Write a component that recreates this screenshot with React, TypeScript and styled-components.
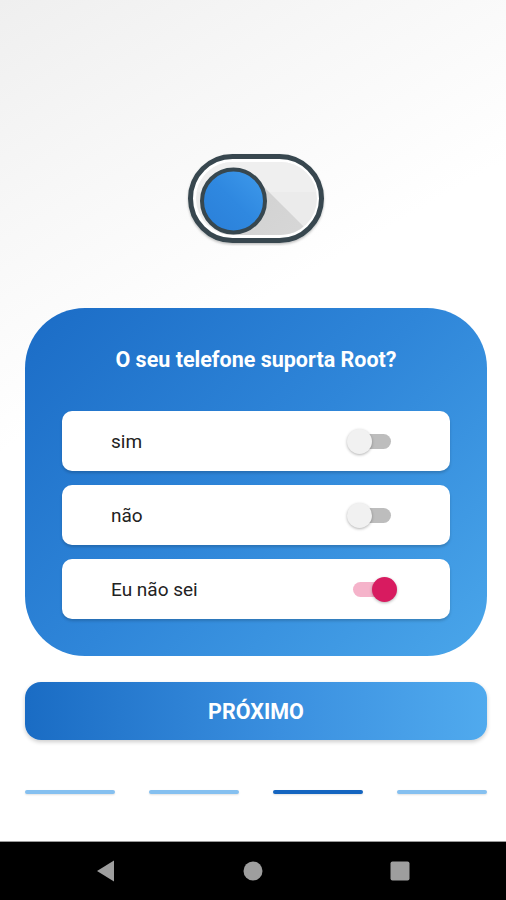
import React, { useState } from 'react';
import styled, { createGlobalStyle } from 'styled-components';

const GlobalStyle = createGlobalStyle`
  html, body {
    margin: 0;
    padding: 0;
  }
  body {
    font-family: Roboto, "Noto Sans", Arial, sans-serif;
    background: #ffffff;
  }
`;

const Screen = styled.div`
  width: 506px;
  height: 900px;
  display: flex;
  flex-direction: column;
  overflow: hidden;
  background: linear-gradient(150deg, #efefef 0%, #f7f7f7 18%, #ffffff 38%, #ffffff 100%);
`;

const Content = styled.div`
  flex: 1;
  display: flex;
  flex-direction: column;
  align-items: center;
  padding: 152px 13px 0 19px;
`;

const Hero = styled.svg`
  display: block;
  width: 140px;
  height: 94px;
`;

const Card = styled.div`
  width: 462px;
  box-sizing: border-box;
  margin-top: 62px;
  padding: 39px 37px 37px;
  border-radius: 60px;
  background: linear-gradient(135deg, #1b6cc6 0%, #2f86d9 50%, #4aa6ea 100%);
  display: flex;
  flex-direction: column;
  gap: 14px;
`;

const Title = styled.h2`
  margin: 0 0 24px;
  text-align: center;
  color: #ffffff;
  font-size: 21.5px;
  line-height: 26px;
  font-weight: 700;
`;

const Option = styled.label`
  height: 60px;
  border-radius: 10px;
  background: #ffffff;
  box-shadow: 0 2px 3px rgba(0, 0, 0, 0.18);
  display: flex;
  align-items: center;
  justify-content: space-between;
  padding: 0 53px 0 49px;
  cursor: pointer;
`;

const OptionText = styled.span`
  font-size: 19px;
  color: #222222;
`;

const Switch = styled.span<{ $on: boolean }>`
  position: relative;
  width: 38px;
  height: 15px;
  margin-right: 6px;
  border-radius: 8px;
  background: ${(p) => (p.$on ? '#f5b3ca' : '#bdbdbd')};

  &::after {
    content: '';
    position: absolute;
    top: -5px;
    left: ${(p) => (p.$on ? '19px' : '-6px')};
    width: 25px;
    height: 25px;
    border-radius: 50%;
    background: ${(p) => (p.$on ? '#d81b60' : '#f1f1f1')};
    box-shadow: 0 1px 3px rgba(0, 0, 0, 0.3);
  }
`;

const NextButton = styled.button`
  width: 462px;
  height: 58px;
  margin-top: 26px;
  border: none;
  border-radius: 16px;
  background: linear-gradient(90deg, #1a6cc4 0%, #3a8fdf 55%, #50aaee 100%);
  box-shadow: 0 2px 4px rgba(0, 0, 0, 0.2);
  color: #ffffff;
  font-family: Roboto, "Noto Sans", Arial, sans-serif;
  font-size: 21.5px;
  font-weight: 700;
  cursor: pointer;
`;

const Steps = styled.div`
  width: 462px;
  margin-top: 50px;
  display: flex;
  justify-content: space-between;
`;

const Step = styled.span<{ $active: boolean }>`
  width: 90px;
  height: 4px;
  border-radius: 2px;
  background: ${(p) => (p.$active ? '#1565c0' : '#85c0f0')};
  box-shadow: 0 1px 2px rgba(0, 0, 0, 0.12);
`;

const NavBar = styled.div`
  height: 58px;
  border-top: 1px solid #9a9a9a;
  background: #000000;
  display: flex;
  align-items: center;
  justify-content: center;
  gap: 125px;
`;

const NavIcon = styled.svg`
  display: block;
  width: 22px;
  height: 22px;
  fill: #9e9e9e;
`;

const options = ['sim', 'não', 'Eu não sei'];

const ToggleHero = () => {
  // knob centre and radius, shadow runs out at 45°
  const cx = 47.5;
  const cy = 49;
  const r = 31.5;
  const k = r * 0.7071;
  const shadow = `${cx + k},${cy - k} ${cx + k + 140},${cy - k + 140} ${cx - k + 140},${cy + k + 140} ${cx - k},${cy + k}`;
  return (
    <Hero viewBox="0 0 140 94">
      <defs>
        <clipPath id="inner">
          <rect x="10" y="10" width="121" height="73" rx="36.5" />
        </clipPath>
        <linearGradient id="shade" x1="0" y1="0" x2="1" y2="1">
          <stop offset="0" stopColor="#cfcfcf" />
          <stop offset="1" stopColor="#e2e2e2" />
        </linearGradient>
        <linearGradient id="knob" x1="0" y1="1" x2="1" y2="0">
          <stop offset="0" stopColor="#2a7fd8" />
          <stop offset="0.5" stopColor="#2f88e0" />
          <stop offset="1" stopColor="#3f9bec" />
        </linearGradient>
        <filter id="drop" x="-10%" y="-10%" width="120%" height="130%">
          <feDropShadow dx="0" dy="1.5" stdDeviation="1.2" floodColor="#000" floodOpacity="0.25" />
        </filter>
      </defs>
      <rect x="4.5" y="4.5" width="131" height="84" rx="42" fill="#ffffff" stroke="#37474f" strokeWidth="5" filter="url(#drop)" />
      <rect x="10" y="10" width="121" height="73" rx="36.5" fill="#ebebeb" />
      <g clipPath="url(#inner)">
        <rect x="10" y="10" width="121" height="30" fill="#efefef" />
        <polygon points={shadow} fill="url(#shade)" />
      </g>
      <circle cx={cx} cy={cy} r={r} fill="url(#knob)" stroke="#37474f" strokeWidth="4" />
    </Hero>
  );
};

export default function App() {
  const [selected, setSelected] = useState(2);
  return (
    <>
      <GlobalStyle />
      <Screen>
        <Content>
          <ToggleHero />
          <Card>
            <Title>O seu telefone suporta Root?</Title>
            {options.map((label, i) => (
              <Option key={label} onClick={() => setSelected(i)}>
                <OptionText>{label}</OptionText>
                <Switch $on={selected === i} />
              </Option>
            ))}
          </Card>
          <NextButton>PRÓXIMO</NextButton>
          <Steps>
            {[0, 1, 2, 3].map((i) => (
              <Step key={i} $active={i === 2} />
            ))}
          </Steps>
        </Content>
        <NavBar>
          <NavIcon viewBox="0 0 22 22">
            <polygon points="2,11 19,0.5 19,21.5" />
          </NavIcon>
          <NavIcon viewBox="0 0 22 22">
            <circle cx="11" cy="11" r="9.5" />
          </NavIcon>
          <NavIcon viewBox="0 0 22 22">
            <rect x="1.5" y="1.5" width="19" height="19" rx="2" />
          </NavIcon>
        </NavBar>
      </Screen>
    </>
  );
}
